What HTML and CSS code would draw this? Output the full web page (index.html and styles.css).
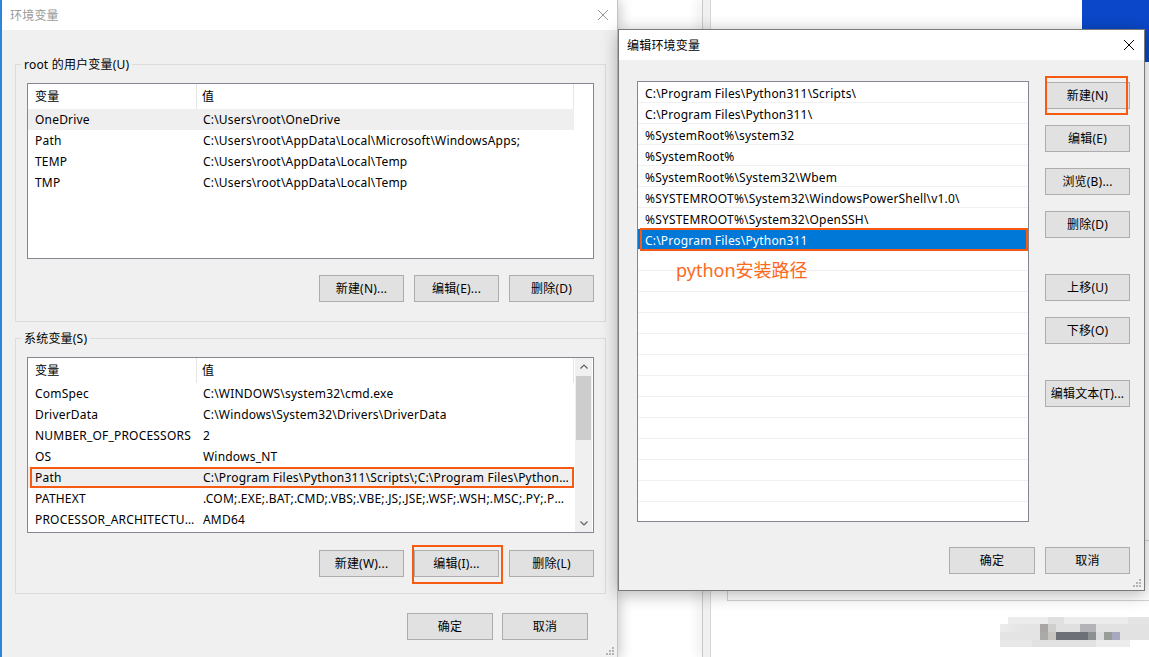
FILE: index.html
```html
<!DOCTYPE html>
<html lang="zh-CN">
<head>
<meta charset="UTF-8">
<title>环境变量</title>
<link rel="stylesheet" href="styles.css">
</head>
<body>
<div class="desktop">
  <!-- things behind the dialogs -->
  <div class="desk-blue"></div>
  <div class="back-pane"></div>
  <div class="back-box"></div>
  <div class="blur">
    <div class="blur-row b1"></div>
    <div class="blur-row b2"></div>
    <div class="blur-row b3"></div>
    <div class="blur-row b4"></div>
  </div>

  <!-- 环境变量 -->
  <div class="window env">
    <div class="titlebar inactive">
      <span>环境变量</span>
      <svg class="x" width="10" height="10" viewBox="0 0 10 10"><path d="M0 0L10 10M10 0L0 10" stroke="currentColor" stroke-width="1"/></svg>
    </div>
    <div class="env-body">
      <div class="group first">
        <div class="group-title">root 的用户变量(U)</div>
        <div class="listview">
          <div class="lv-cols">
            <div class="lv-head"><span class="c1">变量</span><span class="c2">值</span></div>
            <div class="lv-row hl"><span class="c1">OneDrive</span><span class="c2">C:\Users\root\OneDrive</span></div>
            <div class="lv-row"><span class="c1">Path</span><span class="c2">C:\Users\root\AppData\Local\Microsoft\WindowsApps;</span></div>
            <div class="lv-row"><span class="c1">TEMP</span><span class="c2">C:\Users\root\AppData\Local\Temp</span></div>
            <div class="lv-row"><span class="c1">TMP</span><span class="c2">C:\Users\root\AppData\Local\Temp</span></div>
          </div>
        </div>
        <div class="btn-row">
          <button class="btn">新建(N)...</button>
          <button class="btn">编辑(E)...</button>
          <button class="btn">删除(D)</button>
        </div>
      </div>

      <div class="group second">
        <div class="group-title">系统变量(S)</div>
        <div class="listview">
          <div class="lv-cols">
            <div class="lv-head"><span class="c1">变量</span><span class="c2">值</span></div>
            <div class="lv-row"><span class="c1">ComSpec</span><span class="c2">C:\WINDOWS\system32\cmd.exe</span></div>
            <div class="lv-row"><span class="c1">DriverData</span><span class="c2">C:\Windows\System32\Drivers\DriverData</span></div>
            <div class="lv-row"><span class="c1">NUMBER_OF_PROCESSORS</span><span class="c2">2</span></div>
            <div class="lv-row"><span class="c1">OS</span><span class="c2">Windows_NT</span></div>
            <div class="lv-row hl marked"><span class="c1">Path</span><span class="c2">C:\Program Files\Python311\Scripts\;C:\Program Files\Python311\;%SystemRoot%\system32</span></div>
            <div class="lv-row"><span class="c1">PATHEXT</span><span class="c2">.COM;.EXE;.BAT;.CMD;.VBS;.VBE;.JS;.JSE;.WSF;.WSH;.MSC;.PY;.PYW</span></div>
            <div class="lv-row"><span class="c1">PROCESSOR_ARCHITECTURE</span><span class="c2">AMD64</span></div>
          </div>
          <div class="scrollbar">
            <div class="sb-arrow"><svg width="8" height="5" viewBox="0 0 8 5"><path d="M0.5 4.5L4 1L7.5 4.5" fill="none" stroke="#606060" stroke-width="1.2"/></svg></div>
            <div class="sb-track"><div class="sb-thumb"></div></div>
            <div class="sb-arrow"><svg width="8" height="5" viewBox="0 0 8 5"><path d="M0.5 0.5L4 4L7.5 0.5" fill="none" stroke="#606060" stroke-width="1.2"/></svg></div>
          </div>
        </div>
        <div class="btn-row">
          <button class="btn">新建(W)...</button>
          <button class="btn marked-btn">编辑(I)...</button>
          <button class="btn">删除(L)</button>
        </div>
      </div>

      <div class="btn-row env-footer">
        <button class="btn wide">确定</button>
        <button class="btn wide">取消</button>
      </div>
    </div>
    <svg class="grip" width="8" height="8" viewBox="0 0 8 8" fill="#b4b4b4"><rect x="6" y="0" width="2" height="2"/><rect x="3" y="3" width="2" height="2"/><rect x="6" y="3" width="2" height="2"/><rect x="0" y="6" width="2" height="2"/><rect x="3" y="6" width="2" height="2"/><rect x="6" y="6" width="2" height="2"/></svg>
  </div>

  <!-- 编辑环境变量 -->
  <div class="window edit">
    <div class="titlebar">
      <span>编辑环境变量</span>
      <svg class="x" width="10" height="10" viewBox="0 0 10 10"><path d="M0 0L10 10M10 0L0 10" stroke="currentColor" stroke-width="1"/></svg>
    </div>
    <div class="edit-body">
      <div class="edit-main">
        <div class="path-list">
          <div class="path-row">C:\Program Files\Python311\Scripts\</div>
          <div class="path-row">C:\Program Files\Python311\</div>
          <div class="path-row">%SystemRoot%\system32</div>
          <div class="path-row">%SystemRoot%</div>
          <div class="path-row">%SystemRoot%\System32\Wbem</div>
          <div class="path-row">%SYSTEMROOT%\System32\WindowsPowerShell\v1.0\</div>
          <div class="path-row">%SYSTEMROOT%\System32\OpenSSH\</div>
          <div class="path-row selected">C:\Program Files\Python311</div>
          <div class="path-row"></div>
          <div class="path-row"></div>
          <div class="path-row"></div>
          <div class="path-row"></div>
          <div class="path-row"></div>
          <div class="path-row"></div>
          <div class="path-row"></div>
          <div class="path-row"></div>
          <div class="path-row"></div>
          <div class="path-row"></div>
          <div class="path-row"></div>
          <div class="path-row"></div>
          <div class="path-row"></div>
          <span class="note">python安装路径</span>
        </div>
        <div class="side-btns">
          <button class="btn marked-new">新建(N)</button>
          <button class="btn">编辑(E)</button>
          <button class="btn">浏览(B)...</button>
          <button class="btn">删除(D)</button>
          <button class="btn sep">上移(U)</button>
          <button class="btn">下移(O)</button>
          <button class="btn sep">编辑文本(T)...</button>
        </div>
      </div>
      <div class="edit-footer">
        <button class="btn wide">确定</button>
        <button class="btn">取消</button>
      </div>
    </div>
    <svg class="grip" width="8" height="8" viewBox="0 0 8 8" fill="#b4b4b4"><rect x="6" y="0" width="2" height="2"/><rect x="3" y="3" width="2" height="2"/><rect x="6" y="3" width="2" height="2"/><rect x="0" y="6" width="2" height="2"/><rect x="3" y="6" width="2" height="2"/><rect x="6" y="6" width="2" height="2"/></svg>
  </div>
</div>
</body>
</html>
```

FILE: styles.css
```css
* {
  box-sizing: border-box;
}

body {
  margin: 0;
  background: #fff;
}

.desktop {
  position: relative;
  width: 1149px;
  height: 657px;
  overflow: hidden;
  background: #fff;
  font-family: "Noto Sans", "Noto Sans CJK SC", sans-serif;
  font-size: 12px;
  letter-spacing: 0.2px;
  color: #000;
}

/* background bits peeking out */
.desk-blue {
  position: absolute;
  left: 1082px;
  top: 0;
  width: 67px;
  height: 62px;
  background: #0b47c9;
}

.back-pane {
  position: absolute;
  left: 702px;
  top: 0;
  width: 9px;
  height: 657px;
  background: #f0f0f0;
  border-left: 1px solid #c8c8c8;
  border-right: 1px solid #d8d8d8;
  box-shadow: -6px 0 8px rgba(0, 0, 0, 0.06);
}

.back-box {
  position: absolute;
  left: 727px;
  top: 540px;
  width: 430px;
  height: 61px;
  border: 1px solid #d4d4d4;
}

.blur {
  position: absolute;
  left: 1000px;
  top: 617px;
  width: 149px;
}

.blur-row {
  height: 7px;
}

.blur-row.b1 {
  background: linear-gradient(to right, #fff 0, #fff 8px, #ececec 8px, #ececec 48px, #e0e0e0 48px, #e0e0e0 64px, #ececec 64px, #ececec 128px, #e4e4e4 128px);
}

.blur-row.b2 {
  height: 8px;
  background: linear-gradient(to right, #ececec 0, #e4e4e4 24px, #e4e4e4 40px, #a9a5a5 40px, #a9a5a5 48px, #cfcfcf 48px, #cfcfcf 56px, #e0e0e0 56px, #e0e0e0 80px, #b4b4b8 80px, #b4b4b8 96px, #e2e2e2 96px, #e2e2e2 149px);
}

.blur-row.b3 {
  height: 8px;
  background: linear-gradient(to right, #e4e4e4 0, #e4e4e4 40px, #aaa 40px, #aaa 48px, #c8c4c0 48px, #c8c4c0 56px, #6e7078 56px, #6e7078 88px, #8c9090 88px, #8c9090 96px, #dcdcdc 96px, #dcdcdc 104px, #9a9c98 104px, #9a9c98 112px, #a8a8c0 112px, #a8a8c0 120px, #e2e2e2 120px);
}

.blur-row.b4 {
  background: linear-gradient(to right, #e8e8e8 0, #e8e8e8 32px, #e2e2e2 32px, #e2e2e2 96px, #ececec 96px, #ececec 130px, #fff 130px);
}

/* windows */
.window {
  position: absolute;
  background: #f0f0f0;
}

.window.env {
  left: 0;
  top: 0;
  width: 618px;
  height: 659px;
  border-left: 2px solid #2a86dc;
  border-right: 1px solid #c4c4c4;
  box-shadow: 2px 0 12px rgba(0, 0, 0, 0.22);
}

.window.edit {
  left: 618px;
  top: 29px;
  width: 527px;
  height: 562px;
  border: 1px solid #7a7a7a;
  box-shadow: 0 3px 16px rgba(0, 0, 0, 0.3);
}

.titlebar {
  height: 30px;
  background: #fff;
  display: flex;
  align-items: center;
  justify-content: space-between;
  padding: 0 10px 0 8px;
  color: #000;
}

.titlebar.inactive {
  color: #999;
  padding-right: 9px;
}

.grip {
  position: absolute;
  right: 3px;
  bottom: 3px;
}

.window.env .grip {
  bottom: 4px;
}

/* buttons */
.btn {
  font: inherit;
  letter-spacing: inherit;
  color: #000;
  width: 85px;
  height: 27px;
  padding: 0;
  background: #e1e1e1;
  border: 1px solid #adadad;
  border-radius: 0;
  text-align: center;
  line-height: 25px;
  position: relative;
}

.btn.wide {
  width: 86px;
}

.btn-row {
  display: flex;
  justify-content: flex-end;
  gap: 10px;
}

/* 环境变量 body */
.env-body {
  height: 629px;
  padding: 34px 11px 0 13px;
}

.group {
  border: 1px solid #dcdcdc;
  padding: 0 11px 19px 11px;
}

.group.second {
  margin-top: 16px;
  padding-bottom: 16px;
}

.group-title {
  margin: -8px 0 0 -6px;
  width: fit-content;
  padding: 0 3px;
  line-height: 16px;
  background: #f0f0f0;
}

.listview {
  margin-top: 10px;
  height: 176px;
  border: 1px solid #828790;
  background: #fff;
  display: flex;
  overflow: hidden;
}

.group .btn-row {
  margin-top: 16px;
}

.group.second .btn-row {
  margin-top: 17px;
}

.lv-cols {
  width: 546px;
}

.lv-head,
.lv-row {
  display: flex;
  white-space: nowrap;
}

.lv-head {
  height: 25px;
  line-height: 25px;
}

.lv-row {
  height: 21px;
  line-height: 21px;
  position: relative;
}

.lv-row.hl {
  background: #efefef;
}

.c1 {
  width: 169px;
  padding-left: 7px;
  overflow: hidden;
  text-overflow: ellipsis;
}

.c2 {
  width: 377px;
  padding: 0 5px 0 6px;
  overflow: hidden;
  text-overflow: ellipsis;
}

.lv-head .c1,
.lv-head .c2 {
  border-right: 1px solid #e5e5e5;
}

.lv-head .c2 {
  padding-left: 5px;
}

.lv-row.marked::after {
  content: "";
  position: absolute;
  left: 2px;
  right: 0;
  top: 0;
  bottom: 0;
  border: 2px solid #f75a12;
}

.scrollbar {
  width: 17px;
  margin-left: 1px;
  background: #f0f0f0;
  display: flex;
  flex-direction: column;
}

.sb-arrow {
  height: 17px;
  display: flex;
  align-items: center;
  justify-content: center;
}

.sb-track {
  flex: 1;
  padding: 1px 1px 0 1px;
}

.sb-thumb {
  height: 64px;
  background: #cdcdcd;
}

.btn.marked-btn::after {
  content: "";
  position: absolute;
  left: -3px;
  right: -5px;
  top: -6px;
  bottom: -8px;
  border: 2px solid #f75a12;
}

.env-footer {
  margin-top: 19px;
  margin-right: 18px;
  gap: 9px;
}

/* 编辑环境变量 body */
.edit-body {
  height: 530px;
  padding: 21px 14px 0 18px;
}

.edit-main {
  display: flex;
}

.path-list {
  position: relative;
  width: 392px;
  height: 441px;
  border: 1px solid #828790;
  background: #fff;
  overflow: hidden;
}

.path-row {
  height: 21px;
  line-height: 20px;
  padding: 2px 0 0 7px;
  border-bottom: 1px solid #f0f0f0;
  white-space: nowrap;
  position: relative;
}

.path-row.selected {
  background: #0078d7;
  color: #fff;
}

.path-row.selected::after {
  content: "";
  position: absolute;
  left: 2px;
  right: 0;
  top: -1px;
  bottom: -2px;
  border: 2px solid #f75a12;
}

.note {
  position: absolute;
  left: 38px;
  top: 177px;
  font-size: 18px;
  line-height: 22px;
  letter-spacing: 0;
  color: #fb6a1c;
}

.side-btns {
  margin-left: 16px;
  padding-top: 1px;
  display: flex;
  flex-direction: column;
  gap: 16px;
}

.side-btns .sep {
  margin-top: 20px;
}

.btn.marked-new::after {
  content: "";
  position: absolute;
  left: -1px;
  right: 1px;
  top: -7px;
  bottom: -7px;
  border: 2px solid #f75a12;
}

.edit-footer {
  display: flex;
  justify-content: flex-end;
  gap: 10px;
  margin-top: 25px;
}
```
